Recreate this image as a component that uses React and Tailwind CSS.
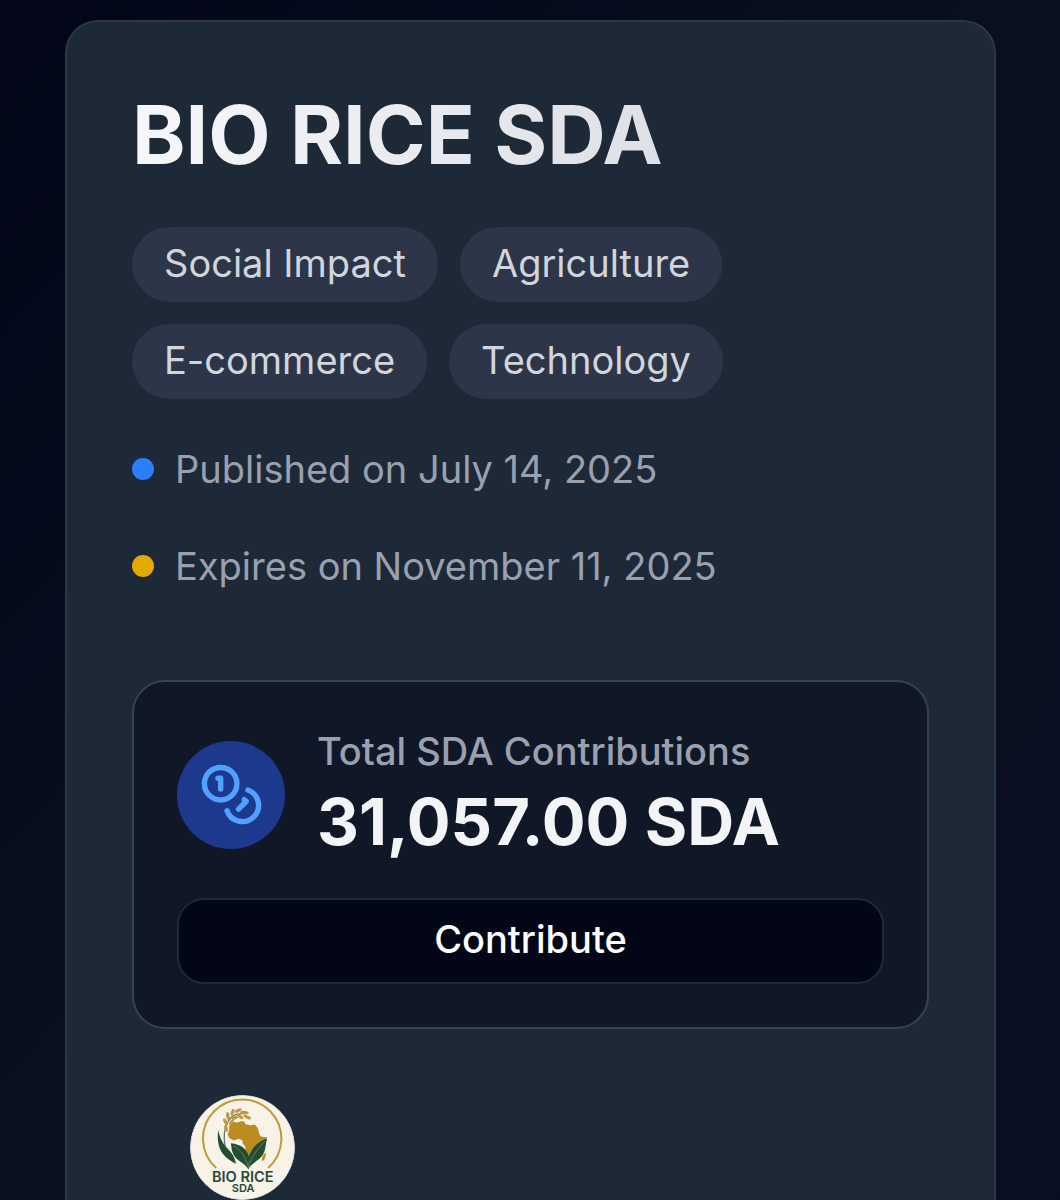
import { Coins } from "lucide-react";

const tags = ["Social Impact", "Agriculture", "E-commerce", "Technology"];

const dates = [
  { dot: "bg-[#2b7fff]", text: "Published on July 14, 2025" },
  { dot: "bg-[#e2a900]", text: "Expires on November 11, 2025" },
];

function Logo() {
  return (
    <svg
      viewBox="59 46 316 316"
      role="img"
      aria-label="Bio Rice SDA logo"
      className="size-[105px] rounded-full"
    >
      <circle cx="217" cy="204" r="157" fill="#f8f3e9" stroke="#d3d5d5" strokeWidth="3" />
      <path
        d="M138 266A118 118 0 1 1 294 266"
        fill="none"
        stroke="#c09a3a"
        strokeWidth="6"
      />
      <path
        d="M177 139L190 127L202 129L214 124L224 127L226 134L240 137L254 135L263 145L268 165L274 172L291 173L288 182L270 201L268 216L259 232L246 246L237 248L231 239L227 218L225 201L218 192L216 182L206 178L191 183L178 176L172 165L177 153Z"
        fill="#bb8c22"
      />
      <path d="M287 219C289 229 283 243 277 245C272 240 277 227 287 219Z" fill="#bb8c22" />
      <path
        d="M174 229C158 194 158 153 174 125C184 108 200 101 216 103"
        fill="none"
        stroke="#68756b"
        strokeWidth="4"
      />
      <g fill="#c19a3c">
        <ellipse cx="168" cy="147" rx="5" ry="11" transform="rotate(-18 168 147)" />
        <ellipse cx="166" cy="127" rx="5" ry="12" transform="rotate(-28 166 127)" />
        <ellipse cx="173" cy="109" rx="5" ry="12" transform="rotate(-8 173 109)" />
        <ellipse cx="187" cy="98" rx="5" ry="11" transform="rotate(18 187 98)" />
        <ellipse cx="204" cy="93" rx="5" ry="11" transform="rotate(64 204 93)" />
        <ellipse cx="223" cy="99" rx="5" ry="13" transform="rotate(96 223 99)" />
        <ellipse cx="231" cy="112" rx="5" ry="13" transform="rotate(116 231 112)" />
        <ellipse cx="210" cy="111" rx="5" ry="11" transform="rotate(124 210 111)" />
        <ellipse cx="184" cy="128" rx="5" ry="10" transform="rotate(36 184 128)" />
        <ellipse cx="194" cy="115" rx="5" ry="10" transform="rotate(70 194 115)" />
      </g>
      <path
        d="M144 151C149 178 160 194 172 207C186 221 194 234 198 253C171 241 151 222 145 195C142 179 142 164 144 151Z"
        fill="#234c34"
      />
      <path
        d="M182 191C211 194 230 207 237 232L235 270C227 252 202 246 191 227C184 215 184 203 182 191Z"
        fill="#234c34"
      />
      <path
        d="M291 177C262 187 242 207 236 234L234 270C243 250 267 245 279 225C287 211 287 191 291 177Z"
        fill="#234c34"
      />
      <path
        d="M189 199C211 211 227 232 234 262M285 185C262 207 244 232 235 262"
        fill="none"
        stroke="#87936f"
        strokeWidth="2"
      />
      <text textAnchor="middle" className="fill-[#294936] font-semibold">
        <tspan x="218" y="307" fontSize="44">
          BIO RICE
        </tspan>
        <tspan x="219" y="338" fontSize="33">
          SDA
        </tspan>
      </text>
    </svg>
  );
}

export default function App() {
  return (
    <div className="flex min-h-screen flex-col bg-linear-to-br from-[#020618] via-[#0a101f] to-[#0a0e22] pt-5 pr-16 pl-[65px] font-['Inter',sans-serif]">
      <main className="flex-1 rounded-t-[33px] border-2 border-b-0 border-[#2b3746] bg-[#1e2938] px-[65px] pt-[68px]">
        <h1 className="bg-linear-to-r from-[#f6f7fa] to-[#d1d5dc] bg-clip-text text-[81px]/[90px] font-bold text-transparent">
          BIO RICE SDA
        </h1>

        <ul className="mt-[47px] flex max-w-[600px] flex-wrap gap-[22px]">
          {tags.map((tag) => (
            <li
              key={tag}
              className="rounded-full bg-[#2c3648] px-8 pt-[9px] pb-[11px] text-[38px]/[55px] text-[#d1d5dc]"
            >
              {tag}
            </li>
          ))}
        </ul>

        <div className="mt-[43px] flex flex-col gap-[43px]">
          {dates.map((date) => (
            <p
              key={date.text}
              className="flex items-center gap-[21px] text-[38px]/[54px] text-[#99a1af]"
            >
              <span className={`size-[22px] shrink-0 rounded-full ${date.dot}`} />
              {date.text}
            </p>
          ))}
        </div>

        <section className="mt-[87px] rounded-[33px] border-2 border-[#364153] bg-[#101828] px-[43px] pt-[42px] pb-[43px]">
          <div className="flex items-center gap-8">
            <div className="flex size-[108px] shrink-0 items-center justify-center rounded-full bg-[#1c398e]">
              <Coins className="size-[65px] text-[#51a2ff]" />
            </div>
            <div>
              <h2 className="text-[38px]/[54px] font-medium text-[#99a1af]">
                Total SDA Contributions
              </h2>
              <p className="text-[65px]/[87px] font-bold text-[#f3f4f6]">31,057.00 SDA</p>
            </div>
          </div>
          <button
            type="button"
            className="mt-[33px] h-[86px] w-full rounded-[27px] border-2 border-[#1e2939] bg-[#020617] pb-1 text-[38px]/[54px] font-medium text-white"
          >
            Contribute
          </button>
        </section>

        <div className="mt-[66px] px-[58px]">
          <Logo />
        </div>
      </main>
    </div>
  );
}
